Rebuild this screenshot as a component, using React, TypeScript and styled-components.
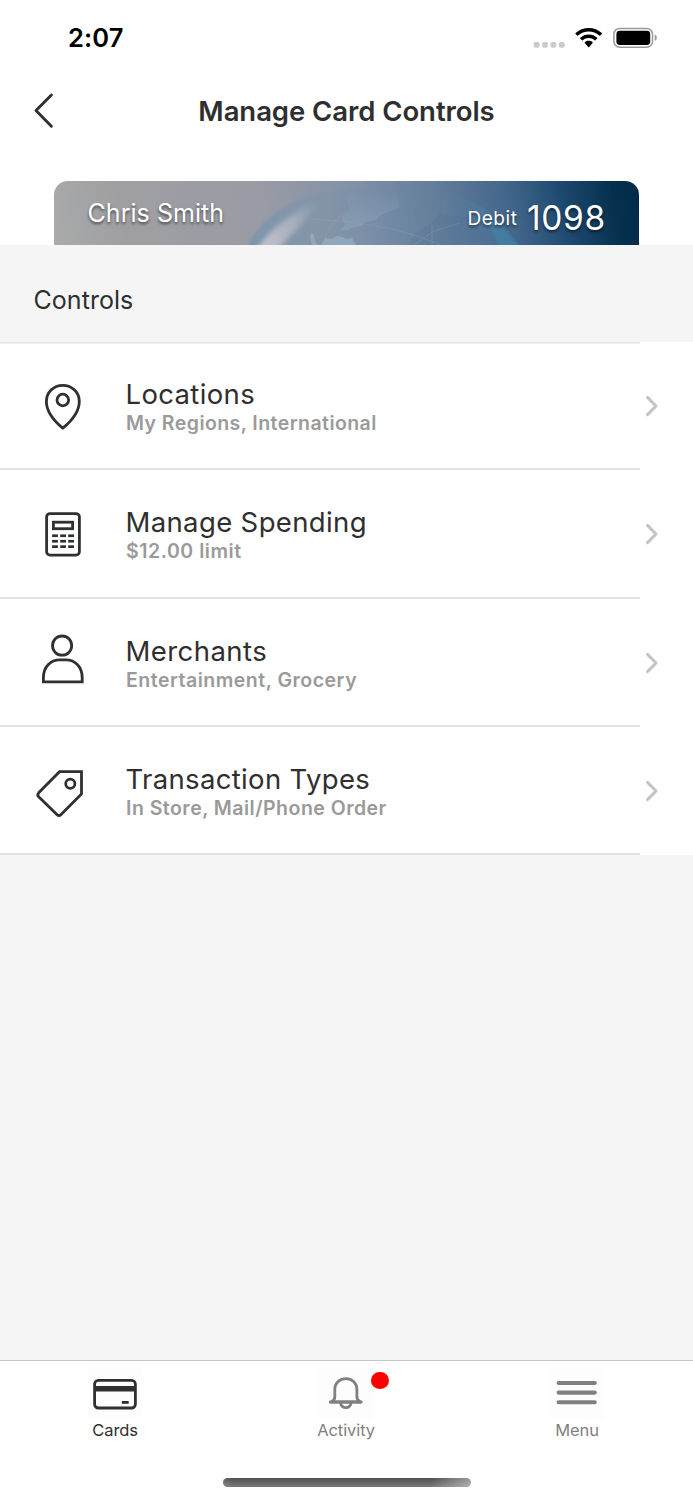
import React from "react";
import styled, { createGlobalStyle } from "styled-components";

const GlobalStyle = createGlobalStyle`
  *, *::before, *::after { box-sizing: border-box; }
  body { margin: 0; background: #fff; font-family: Inter, "Liberation Sans", sans-serif; color: #2f2f30; }
  svg { display: block; }
`;

const Screen = styled.div`
  width: 693px;
  height: 1500px;
  display: flex;
  flex-direction: column;
  background: #fff;
  overflow: hidden;
`;

const StatusBar = styled.header`
  flex: none;
  height: 76px;
  padding: 23px 36px 0 68px;
  display: flex;
  justify-content: space-between;
  align-items: flex-start;
`;

const Clock = styled.time`
  font-size: 25.5px;
  line-height: 30px;
  font-weight: 600;
  letter-spacing: 0.1px;
  color: #000;
`;

const NavBar = styled.nav`
  flex: none;
  height: 70px;
  display: grid;
  grid-template-columns: 88px 1fr 88px;
  align-items: center;
`;

const BackButton = styled.button`
  border: 0;
  padding: 0 0 0 31px;
  background: none;
`;

const ScreenTitle = styled.h1`
  margin: 0;
  text-align: center;
  font-size: 27.5px;
  line-height: 34px;
  font-weight: 600;
  letter-spacing: -0.06px;
  white-space: nowrap;
`;

const CardArea = styled.section`
  flex: none;
  padding: 35px 54px 0;
`;

const BankCard = styled.div`
  height: 64px;
  display: grid;
  border-radius: 14px 14px 0 0;
  overflow: hidden;
  > * { grid-area: 1 / 1; }
`;

const CardInfo = styled.div`
  z-index: 1;
  display: flex;
  align-items: flex-start;
  padding: 0 33px 0 33.5px;
  color: #fff;
  text-shadow: 0 2px 3px rgba(0, 0, 0, 0.55);
`;

const Holder = styled.span`
  flex: 1;
  margin-top: 17px;
  font-size: 25px;
  line-height: 30px;
  letter-spacing: 0.05px;
`;

const CardKind = styled.span`
  margin: 25px 9.5px 0 0;
  font-size: 19px;
  line-height: 26px;
  letter-spacing: 0.55px;
`;

const CardDigits = styled.span`
  margin-top: 17px;
  font-size: 33.5px;
  line-height: 40px;
  letter-spacing: 0.7px;
`;

const Content = styled.main`
  flex: 1;
  background: #f5f5f5;
`;

const SectionTitle = styled.h2`
  margin: 0;
  height: 97px;
  padding: 38px 33.5px 0;
  font-size: 25px;
  line-height: 34px;
  font-weight: 400;
  letter-spacing: 0.05px;
`;

const ControlList = styled.div`
  display: grid;
  grid-template-rows: 128px 129px 128px 128px;
  background: linear-gradient(#e3e3e4, #e3e3e4) 0 0 / 640px 1.5px no-repeat, #fff;
`;

const ControlRow = styled.div`
  display: grid;
  grid-template-columns: 93px 1fr 47px;
  padding-left: 33px;
  background: linear-gradient(#e3e3e4, #e3e3e4) 0 100% / 640px 2px no-repeat;
  > svg:first-child { margin-top: 32px; }
  > svg:last-child { margin: 52px 0 0 -3px; }
`;

const RowText = styled.div`
  padding-top: 35px;
  white-space: nowrap;
`;

const RowTitle = styled.div<{ $track: number }>`
  font-size: 27.5px;
  line-height: 34px;
  margin-left: -0.5px;
  letter-spacing: ${(p) => p.$track}px;
`;

const RowDetail = styled.div<{ $track: number }>`
  font-size: 19.5px;
  line-height: 24px;
  font-weight: 600;
  letter-spacing: ${(p) => p.$track}px;
  color: #9a9a9b;
`;

const TabBar = styled.footer`
  flex: none;
  height: 140px;
  border-top: 1px solid #c6c6c7;
  background: #fff;
  display: flex;
  flex-direction: column;
  align-items: center;
`;

const Tabs = styled.div`
  width: 100%;
  height: 117px;
  display: grid;
  grid-template-columns: repeat(3, 1fr);
`;

const Tab = styled.div<{ $active?: boolean }>`
  display: flex;
  flex-direction: column;
  align-items: center;
  padding: 6px 0.8px 0 0;
  font-size: 16.5px;
  line-height: 22px;
  letter-spacing: -0.09px;
  color: ${(p) => (p.$active ? "#2f2f30" : "#808080")};
`;

const TabIcon = styled.div`
  position: relative;
  width: 54px;
  height: 52px;
  background: #fdfdfd;
`;

const Badge = styled.i`
  position: absolute;
  left: 52.4px;
  top: 5px;
  width: 17.4px;
  height: 17.4px;
  border-radius: 50%;
  background: #ff0000;
`;

const HomeIndicator = styled.div`
  width: 248px;
  height: 9px;
  border-radius: 5px;
  background:
    linear-gradient(90deg, rgba(255,255,255,0.12), transparent 4%, transparent 84%, rgba(255,255,255,0.42)),
    linear-gradient(#505050, #7a7a7a);
`;

const StatusIcons = () => (
  <svg width="126" height="30" viewBox="0 0 126 30">
    <g fill="#cbcbcb">
      {[2.7, 11.1, 19.5, 27.9].map((x) => <rect key={x} x={x} y="19" width="5.8" height="5.8" rx="1.8" />)}
    </g>
    <path fill="#000" d="M57.7 5C52.7 5 48.1 6.9 44.6 10.1Q44.2 10.6 44.6 11L46.2 12.6Q46.6 13 47.1 12.6C50 10 53.6 8.5 57.7 8.5C61.8 8.5 65.4 10 68.3 12.6Q68.8 13 69.2 12.6L70.8 11Q71.2 10.6 70.8 10.1C67.3 6.9 62.7 5 57.7 5Z" />
    <path fill="#000" d="M57.7 11.4C54.5 11.4 51.5 12.6 49.2 14.7Q48.8 15.1 49.2 15.5L51 17.2Q51.4 17.6 51.9 17.2C53.4 15.8 55.4 15 57.7 15C60 15 62 15.8 63.5 17.2Q64 17.6 64.4 17.2L66.2 15.5Q66.6 15.1 66.2 14.7C63.9 12.6 60.9 11.4 57.7 11.4Z" />
    <path fill="#000" d="M57.7 17.8C56.2 17.8 54.9 18.3 53.8 19.2Q53.4 19.6 53.8 20L57.2 23.9Q57.7 24.4 58.2 23.9L61.6 20Q62 19.6 61.6 19.2C60.5 18.3 59.2 17.8 57.7 17.8Z" />
    <rect x="82.9" y="5.4" width="38.6" height="18.8" rx="5.8" fill="none" stroke="#999" strokeWidth="1.5" />
    <rect x="85.4" y="7.8" width="33.8" height="14.2" rx="3.4" fill="#000" />
    <path d="M123.7 11.6C125 12 125.8 13.2 125.8 14.7C125.8 16.2 125 17.4 123.7 17.8Z" fill="#999" />
  </svg>
);

const CardArt = () => (
  <svg width="585" height="64" viewBox="0 0 585 64">
    <defs>
      <linearGradient id="base" x1="0" y1="50" x2="575" y2="-60" gradientUnits="userSpaceOnUse">
        <stop offset="0" stopColor="#a9aaaa" />
        <stop offset="0.12" stopColor="#9f9fa2" />
        <stop offset="0.36" stopColor="#999ba5" />
        <stop offset="0.52" stopColor="#8191a8" />
        <stop offset="0.66" stopColor="#627c9a" />
        <stop offset="0.78" stopColor="#406489" />
        <stop offset="0.86" stopColor="#1f4a70" />
        <stop offset="0.95" stopColor="#04304e" />
        <stop offset="1" stopColor="#022a48" />
      </linearGradient>
      <linearGradient id="globe" x1="194" y1="0" x2="466" y2="0" gradientUnits="userSpaceOnUse">
        <stop offset="0" stopColor="#7594ae" stopOpacity="0.8" />
        <stop offset="0.3" stopColor="#7c93aa" stopOpacity="0.45" />
        <stop offset="0.7" stopColor="#5a7d9c" stopOpacity="0.2" />
        <stop offset="0.88" stopColor="#4a7da0" stopOpacity="0.4" />
        <stop offset="1" stopColor="#2f7cab" stopOpacity="0.8" />
      </linearGradient>
      <linearGradient id="fadeUp" x1="0" y1="0" x2="0" y2="64" gradientUnits="userSpaceOnUse">
        <stop offset="0.1" stopColor="#8ba3b6" stopOpacity="0" />
        <stop offset="0.7" stopColor="#8ba6b9" stopOpacity="0.5" />
      </linearGradient>
      <linearGradient id="streak" x1="262" y1="20" x2="210" y2="64" gradientUnits="userSpaceOnUse">
        <stop offset="0" stopColor="#b5b8c3" stopOpacity="0" />
        <stop offset="0.45" stopColor="#b9bbc6" stopOpacity="0.65" />
        <stop offset="1" stopColor="#c8c7d0" stopOpacity="0.9" />
      </linearGradient>
      <filter id="soft" x="-30%" y="-60%" width="160%" height="220%"><feGaussianBlur stdDeviation="2.8" /></filter>
      <filter id="edge"><feGaussianBlur stdDeviation="1.4" /></filter>
    </defs>
    <rect width="585" height="64" fill="url(#base)" />
    <path d="M193 68C201 46 221 27 252 16C285 5 375 1 409 17C432 28 449 44 467 68Z" fill="url(#globe)" filter="url(#edge)" />
    <path d="M202 70C212 53 232 34 266 18C256 34 241 51 221 70Z" fill="url(#streak)" filter="url(#soft)" />
    <path d="M286 49L291 44L288 36L296 28L292 16L304 4L340 2L346 26L327 34L322 39L311 41L308 45L299 46L295 49Z" fill="url(#fadeUp)" />
    <path d="M257 51L260 54L261 60L264 64H258L256 56Z M267 64L271 57L277 58L283 55L289 56L292 58L298 57L302 64Z" fill="#9ab8c8" opacity="0.55" />
    <path d="M354 64L362 51L378 42L386 31L398 36L410 34L421 40L426 49L438 54L447 64Z" fill="#536b90" opacity="0.18" />
    <path d="M258 38C292 40 342 44 386 64M270 62C272 49 280 38 292 31M360 64L380 50L406 42M378 64V44" fill="none" stroke="#8cb7cf" strokeWidth="0.9" opacity="0.28" />
    <path d="M409 17C432 26 449 42 467 68H446C438 46 426 30 409 17Z" fill="#4688aa" opacity="0.4" filter="url(#edge)" />
  </svg>
);

const BackIcon = () => (
  <svg width="26" height="40" viewBox="0 0 26 40" fill="none" stroke="#2f3033" strokeWidth="2.9" strokeLinecap="round" strokeLinejoin="round">
    <path d="M20.4 4L5 19.6L20.4 35.3" />
  </svg>
);

const ChevronIcon = () => (
  <svg width="18" height="24" viewBox="0 0 18 24" fill="none" stroke="#c4c4c6" strokeWidth="3" strokeLinecap="round" strokeLinejoin="round">
    <path d="M4.5 3.4L13 12L4.5 20.6" />
  </svg>
);

const rowIcon = { width: 60, height: 64, viewBox: "0 0 60 64", fill: "none", stroke: "#2f3032", strokeWidth: 2.8 };

const PinIcon = () => (
  <svg {...rowIcon} strokeLinejoin="round">
    <path d="M29.8 11.3C20.3 11.3 13.4 18.5 13.4 27.5C13.4 38.5 20.5 46.5 29.8 54.2C39.1 46.5 46.3 38.5 46.3 27.5C46.3 18.5 39.3 11.3 29.8 11.3Z" />
    <circle cx="29.8" cy="26" r="5.8" />
  </svg>
);

const CalculatorIcon = () => (
  <svg {...rowIcon}>
    <rect x="13.6" y="11.6" width="32.8" height="41.5" rx="3.4" />
    <rect x="20.4" y="20.2" width="19.2" height="6.5" />
    <g fill="#2f3032" stroke="none">
      {[32.4, 37.9, 43.3].map((y) =>
        [19.1, 27.2, 35.2].map((x) => <rect key={`${x}-${y}`} x={x} y={y} width="5.8" height="2.7" />)
      )}
    </g>
  </svg>
);

const PersonIcon = () => (
  <svg {...rowIcon}>
    <circle cx="29.1" cy="14.6" r="9.6" />
    <path d="M10.4 50.9V46.7C10.4 35.7 17.6 28.9 26.8 28.9H32.8C42.2 28.9 49.2 35.7 49.2 46.7V50.9Z" />
  </svg>
);

const TagIcon = () => (
  <svg {...rowIcon}>
    <path d="M26.5 12.7H48.5V35L28.1 55.4Q26 57.5 23.9 55.4L5.9 38Q3.8 36 5.7 33.8Z" />
    <circle cx="37.3" cy="24.8" r="4.6" />
  </svg>
);

const CardTabIcon = () => (
  <svg width="54" height="52" viewBox="0 0 54 52" fill="none" stroke="#2f3032" strokeWidth="2.8">
    <rect x="6.6" y="13.4" width="40.8" height="27.6" rx="3.8" />
    <path d="M6 21.7H48" strokeWidth="5.4" />
    <path d="M33.8 35.4H40.7" />
  </svg>
);

const BellIcon = () => (
  <svg width="54" height="52" viewBox="0 0 54 52" fill="none" stroke="#808080" strokeWidth="2.8">
    <path d="M11.7 35H41.9" strokeWidth="3.6" strokeLinecap="round" />
    <path d="M12.6 34.4Q15.8 33.5 15.8 29.5V22.4C15.8 16 20.4 11.7 26.9 11.7C33.3 11.7 37.9 16 37.9 22.4V29.5Q37.9 33.5 41.1 34.4" />
    <path d="M21.5 35.8C22.1 39 24 40.7 26.8 40.7C29.6 40.7 31.5 39 32.1 35.8" />
  </svg>
);

const MenuIcon = () => (
  <svg width="54" height="52" viewBox="0 0 54 52" stroke="#808080" strokeWidth="4.1" strokeLinecap="round">
    <path d="M8.6 16H44.8M8.6 25.6H44.8M8.6 35.2H44.8" />
  </svg>
);

const controls = [
  { title: "Locations", track: 0.35, detail: "My Regions, International", detailTrack: 0.44, Icon: PinIcon },
  { title: "Manage Spending", track: 0.36, detail: "$12.00 limit", detailTrack: 0.54, Icon: CalculatorIcon },
  { title: "Merchants", track: 0.44, detail: "Entertainment, Grocery", detailTrack: 0.5, Icon: PersonIcon },
  { title: "Transaction Types", track: 0.34, detail: "In Store, Mail/Phone Order", detailTrack: 0.48, Icon: TagIcon },
];

export default function App() {
  return (
    <Screen>
      <GlobalStyle />
      <StatusBar>
        <Clock>2:07</Clock>
        <StatusIcons />
      </StatusBar>
      <NavBar>
        <BackButton aria-label="Back"><BackIcon /></BackButton>
        <ScreenTitle>Manage Card Controls</ScreenTitle>
      </NavBar>
      <CardArea>
        <BankCard>
          <CardArt />
          <CardInfo>
            <Holder>Chris Smith</Holder>
            <CardKind>Debit</CardKind>
            <CardDigits>1098</CardDigits>
          </CardInfo>
        </BankCard>
      </CardArea>
      <Content>
        <SectionTitle>Controls</SectionTitle>
        <ControlList>
          {controls.map(({ title, track, detail, detailTrack, Icon }) => (
            <ControlRow key={title}>
              <Icon />
              <RowText>
                <RowTitle $track={track}>{title}</RowTitle>
                <RowDetail $track={detailTrack}>{detail}</RowDetail>
              </RowText>
              <ChevronIcon />
            </ControlRow>
          ))}
        </ControlList>
      </Content>
      <TabBar>
        <Tabs>
          <Tab $active>
            <TabIcon><CardTabIcon /></TabIcon>
            Cards
          </Tab>
          <Tab>
            <TabIcon><BellIcon /><Badge /></TabIcon>
            Activity
          </Tab>
          <Tab>
            <TabIcon><MenuIcon /></TabIcon>
            Menu
          </Tab>
        </Tabs>
        <HomeIndicator />
      </TabBar>
    </Screen>
  );
}
